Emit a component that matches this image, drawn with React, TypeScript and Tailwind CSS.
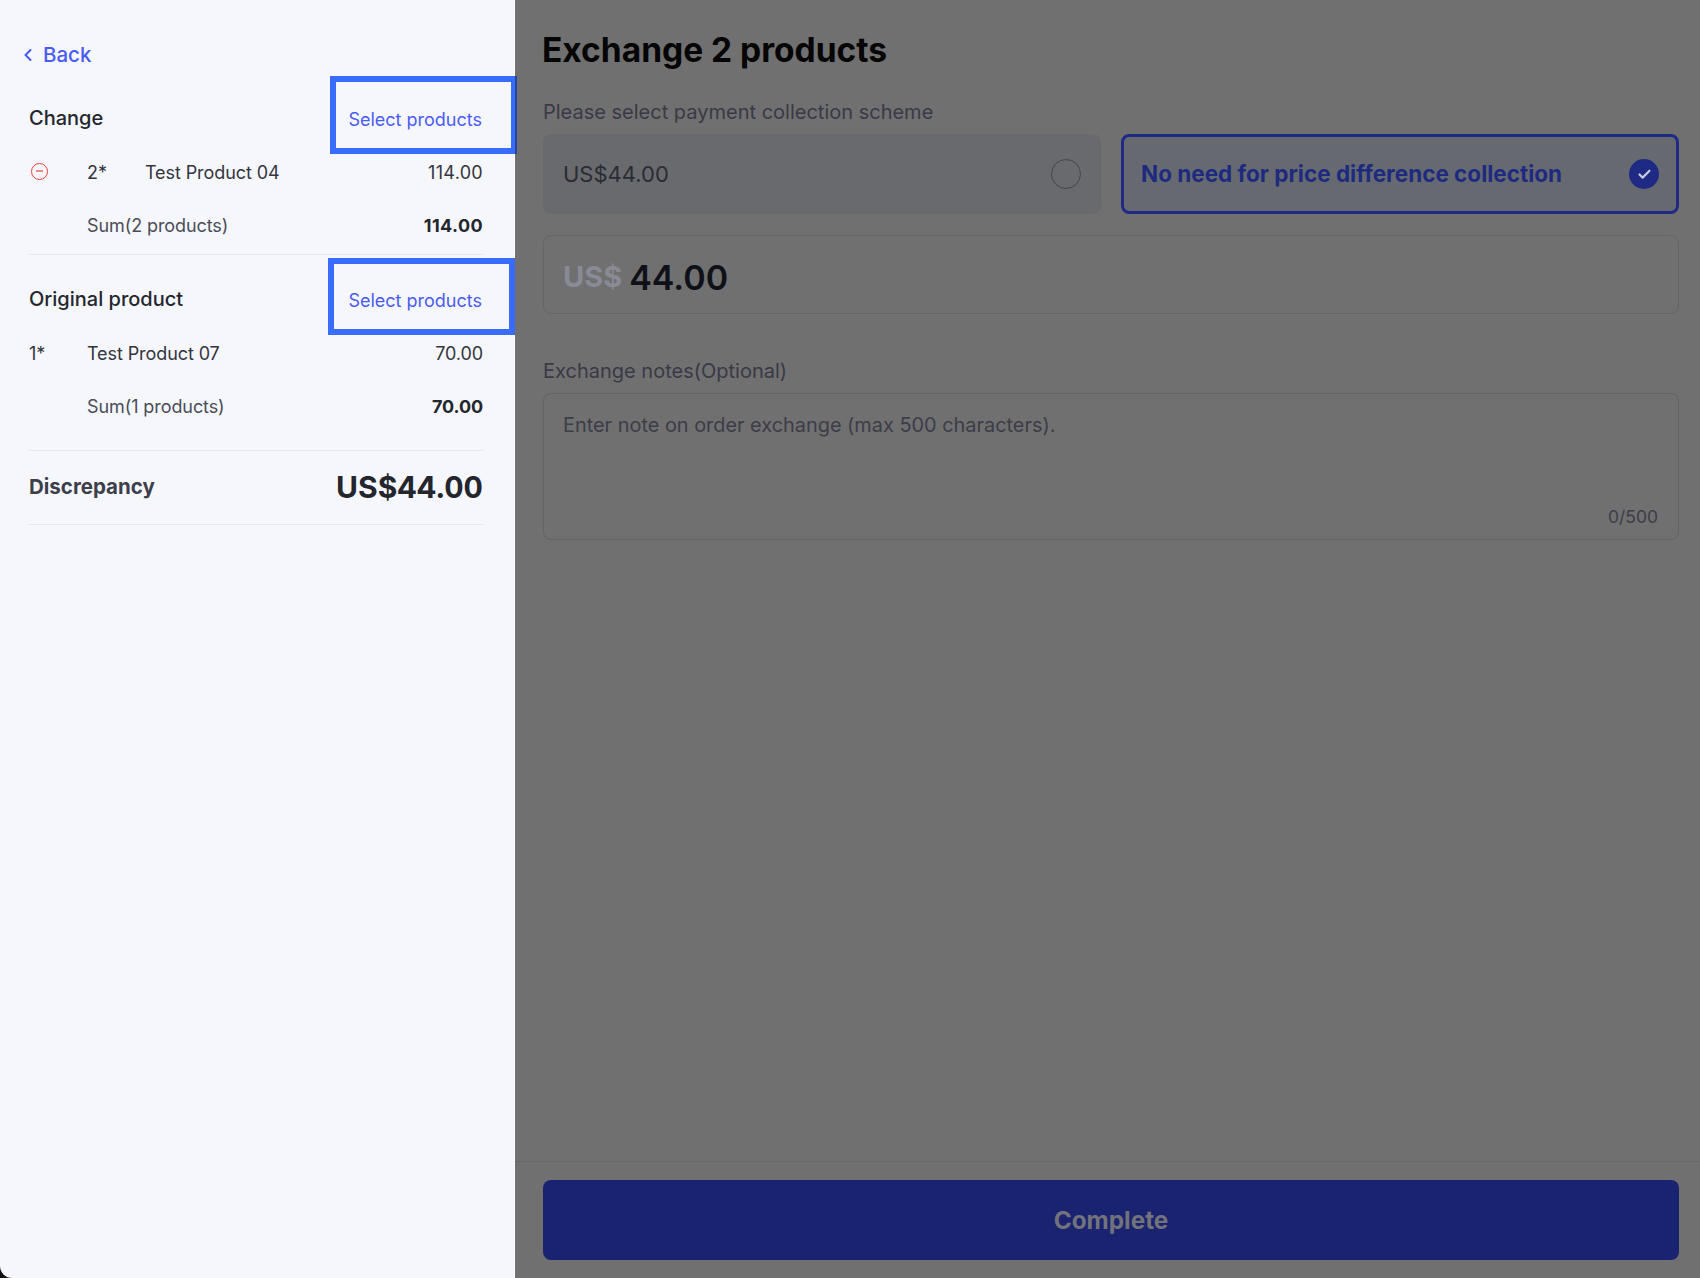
import { ChevronLeft, Check } from "lucide-react";

const font = { fontFamily: "Inter, 'Noto Sans', sans-serif" };

const Highlight = ({ className, children }: { className: string; children?: React.ReactNode }) => (
  <div className={`absolute border-[6px] border-[#3a6cfb] pointer-events-none ${className}`}>{children}</div>
);

const ProductRow = ({ qty, name, price, icon, priceClass }: { qty: string; name: string; price: string; icon?: boolean; priceClass?: string }) => (
  <div className="flex h-[52px] items-center pb-[2px] text-[18px] tracking-[-0.005em] text-[#33353d]">
    <div className="flex w-[58px] items-center">
      {icon ? (
        <span className="mb-[2px] ml-[2px] mr-[16px] flex h-[17px] w-[17px] shrink-0 items-center justify-center rounded-full border border-[#ef4136]">
          <span className="h-[2px] w-[7px] bg-[#f08a83]" />
        </span>
      ) : (
        qty
      )}
    </div>
    {icon && <span className="w-[58px]">{qty}</span>}
    <span className="flex-1">{name}</span>
    <span className={priceClass}>{price}</span>
  </div>
);

const SumRow = ({ label, price, priceClass }: { label: string; price: string; priceClass?: string }) => (
  <div className="flex h-[52px] items-center pl-[58px] text-[18px] tracking-[-0.005em] text-[#4a4d57]">
    <span className="flex-1">{label}</span>
    <span className={`font-bold text-[#24262e] ${priceClass ?? ""}`}>{price}</span>
  </div>
);

const SectionHead = ({ title, children }: { title: string; children: React.ReactNode }) => (
  <div className="relative flex h-[50px] items-center justify-between">
    <span className="text-[20px] font-medium text-[#24262e]">{title}</span>
    <span className="pr-[1px] pt-[2px] text-[18px] text-[#4a5cf5]">Select products</span>
    {children}
  </div>
);

export default function App() {
  return (
    <div className="flex h-[1278px] w-full overflow-hidden bg-[#111111]" style={font}>
      <aside className="relative z-10 h-full w-[515px] shrink-0 rounded-bl-[12px] border-r border-white bg-[#f5f7fc] pl-[29px] pr-[31px] pt-[39px]">
        <div className="-ml-[11px] flex h-8 items-center gap-[5px] text-[20.5px] font-medium text-[#4a5cf5]">
          <ChevronLeft size={20} strokeWidth={2.5} />
          <span>Back</span>
        </div>

        <div className="mt-[22px]">
          <SectionHead title="Change">
            <Highlight className="right-[-34px] top-[-17px] h-[78px] w-[187px]">
              {/* the part of the frame that lies over the dimmed panel */}
              <span className="absolute bottom-[-6px] right-[-6px] top-[-6px] w-[2px] bg-[#26459c]" />
            </Highlight>
          </SectionHead>
        </div>
        <div className="mt-[4px]">
          <ProductRow qty="2*" name="Test Product 04" price="114.00" icon priceClass="tracking-[0.3px]" />
          <SumRow label="Sum(2 products)" price="114.00" priceClass="tracking-[0.4px]" />
        </div>
        <div className="mt-[3px] border-t border-[#e6e8ee]" />

        <div className="mt-[19px]">
          <SectionHead title="Original product">
            <Highlight className="right-[-32px] top-[-16px] h-[77px] w-[187px]" />
          </SectionHead>
        </div>
        <div className="mt-[4px]">
          <ProductRow qty="1*" name="Test Product 07" price="70.00" />
          <SumRow label="Sum(1 products)" price="70.00" />
        </div>
        <div className="mt-[18px] border-t border-[#e6e8ee]" />

        <div className="flex h-[74px] items-center justify-between border-b border-[#e6e8ee]">
          <span className="text-[20.5px] font-bold text-[#3c3f4a]">Discrepancy</span>
          <span className="text-[30px] font-bold tabular-nums text-[#24262e]">US$44.00</span>
        </div>
      </aside>

      <main className="flex h-full flex-1 flex-col bg-[#707070]">
        <div className="flex flex-1 flex-col pl-[28px] pr-[21px] pt-[25px]">
          <h1 className="-ml-[1px] flex h-[50px] items-center text-[33.5px] font-bold text-[#050506]">Exchange 2 products</h1>
          <div className="mt-[25px] text-[20px] leading-6 text-[#383a46]">Please select payment collection scheme</div>

          <div className="mt-[10px] grid grid-cols-2 gap-[20px]">
            <div className="flex h-[80px] items-center justify-between rounded-lg bg-[#696a6d] pl-[20px] pr-[20px] text-[22px] text-[#2a2c33]">
              <span>US$44.00</span>
              <span className="h-[30px] w-[30px] rounded-full border border-[#44464c]" />
            </div>
            <div className="flex h-[80px] items-center justify-between rounded-lg border-[3px] border-[#1f2a85] bg-[#666a70] pl-[17px] pr-[17px] text-[22.5px] font-bold text-[#1e2a80]">
              <span>No need for price difference collection</span>
              <span className="flex h-[30px] w-[30px] items-center justify-center rounded-full bg-[#1f2a85] text-[#c8cadb]">
                <Check size={15} strokeWidth={3.5} />
              </span>
            </div>
          </div>

          <div className="mt-[21px] flex h-[79px] items-center gap-[7px] rounded-lg border border-[#656565] pl-[19px] pt-[5px]">
            <span className="text-[29px] font-bold text-[#888a96]">US$</span>
            <span className="text-[34px] font-semibold text-[#0f1118]">44.00</span>
          </div>

          <div className="mt-[45px] text-[20px] leading-6 text-[#383a46]">Exchange notes(Optional)</div>

          <div className="relative mt-[10px] h-[147px] rounded-lg border border-[#636368] pl-[19px] pt-[19px] text-[19.9px] leading-6 text-[#3c3d48]">
            Enter note on order exchange (max 500 characters).
            <span className="absolute bottom-[10px] right-[20px] text-[17.5px] text-[#3c3d48]">0/500</span>
          </div>
        </div>

        <div className="border-t border-[#686868] pb-[18px] pl-[28px] pr-[21px] pt-[18px]">
          <button className="flex h-[80px] w-full items-center justify-center rounded-lg bg-[#1a2370] text-[24.3px] font-bold text-[#72727c]">
            Complete
          </button>
        </div>
      </main>
    </div>
  );
}
